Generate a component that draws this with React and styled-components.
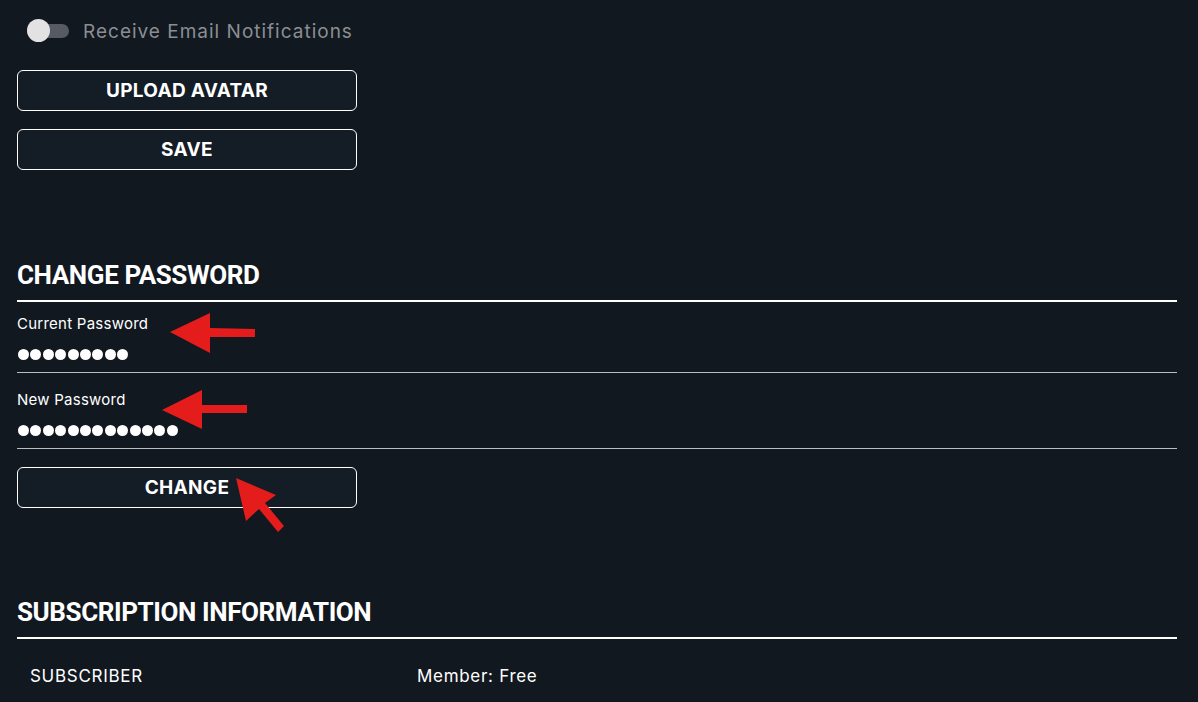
import styled, { createGlobalStyle } from 'styled-components';

const GlobalStyle = createGlobalStyle`
  html, body {
    margin: 0;
    padding: 0;
    background: #111820;
    color: #ffffff;
    font-family: Inter, 'Noto Sans', sans-serif;
  }
`;

function Dots({ count }) {
  return (
    <DotRow>
      {Array.from({ length: count }).map((_, i) => (
        <Dot key={i} />
      ))}
    </DotRow>
  );
}

function App() {
  return (
    <Page>
      <GlobalStyle />
      <ToggleRow>
        <Track>
          <Knob />
        </Track>
        <ToggleLabel>Receive Email Notifications</ToggleLabel>
      </ToggleRow>

      <ButtonStack>
        <Button type="button">UPLOAD AVATAR</Button>
        <Button type="button">SAVE</Button>
      </ButtonStack>

      <Section $top={91}>
        <Heading>CHANGE PASSWORD</Heading>
        <Field>
          <Label>Current Password</Label>
          <Dots count={9} />
        </Field>
        <Field>
          <Label>New Password</Label>
          <Dots count={13} />
        </Field>
        <ChangeButton type="button">CHANGE</ChangeButton>
      </Section>

      <Section $top={90}>
        <Heading>SUBSCRIPTION INFORMATION</Heading>
        <InfoRow>
          <span>SUBSCRIBER</span>
          <span>Member: Free</span>
        </InfoRow>
      </Section>

      {/* red annotation arrows drawn over the screenshot */}
      <Annotations width="1198" height="702" viewBox="0 0 1198 702">
        <polygon
          fill="#e41c1c"
          points="170,332 210,313 210,328 255,329 255,337 210,337 210,353"
        />
        <polygon
          fill="#e41c1c"
          points="162,410 202,390 202,405 247,405 247,413 202,413 202,429"
        />
        <polygon
          fill="#e41c1c"
          points="236,478 276,495 265,503 284,526 278,532 259,509 246,521"
        />
      </Annotations>
    </Page>
  );
}

export default App;

const Page = styled.div`
  position: relative;
  width: 1198px;
  height: 702px;
  box-sizing: border-box;
  padding: 19px 21px 0 17px;
  overflow: hidden;
`;

const ToggleRow = styled.div`
  display: flex;
  align-items: center;
  gap: 14px;
  height: 24px;
  padding-left: 10px;
`;

const Track = styled.div`
  position: relative;
  width: 42px;
  height: 14px;
  border-radius: 7px;
  background: #565b63;
`;

const Knob = styled.span`
  position: absolute;
  left: 0;
  top: -5px;
  width: 23px;
  height: 23px;
  border-radius: 50%;
  background: #e2e2e3;
`;

const ToggleLabel = styled.span`
  font-size: 19px;
  color: #8b8e92;
  letter-spacing: 1px;
`;

const ButtonStack = styled.div`
  display: flex;
  flex-direction: column;
  gap: 18px;
  margin-top: 27px;
`;

const Button = styled.button`
  width: 340px;
  height: 41px;
  box-sizing: border-box;
  border: 1px solid #ffffff;
  border-radius: 6px;
  background: #141c25;
  color: #ffffff;
  font-family: Inter, 'Noto Sans', sans-serif;
  font-weight: 700;
  font-size: 19px;
  letter-spacing: 0.3px;
  cursor: pointer;
  padding: 0;
`;

const ChangeButton = styled(Button)`
  margin-top: 18px;
`;

const Section = styled.section`
  margin-top: ${(p) => p.$top}px;
`;

const Heading = styled.h2`
  margin: 0;
  padding-bottom: 11px;
  border-bottom: 2px solid #ffffff;
  font-family: Roboto, 'Liberation Sans', sans-serif;
  font-weight: 700;
  font-size: 26px;
  line-height: 28px;
  letter-spacing: -0.4px;
`;

const Field = styled.div`
  display: flex;
  flex-direction: column;
  gap: 16px;
  padding: 18px 0 12px;
  border-bottom: 1px solid #b9bdc4;

  &:first-of-type {
    padding-top: 13px;
  }
`;

const Label = styled.label`
  font-size: 15px;
  line-height: 18px;
  letter-spacing: 0.25px;
  color: #ffffff;
`;

const DotRow = styled.div`
  display: flex;
  gap: 1.4px;
  padding-left: 1px;
`;

const Dot = styled.span`
  width: 11px;
  height: 11px;
  border-radius: 50%;
  background: #ffffff;
`;

const InfoRow = styled.div`
  display: grid;
  grid-template-columns: 387px 1fr;
  padding: 27px 0 0 13px;
  font-size: 17px;
  line-height: 20px;
  letter-spacing: 0.7px;
`;

const Annotations = styled.svg`
  position: absolute;
  left: 0;
  top: 0;
  pointer-events: none;
`;
